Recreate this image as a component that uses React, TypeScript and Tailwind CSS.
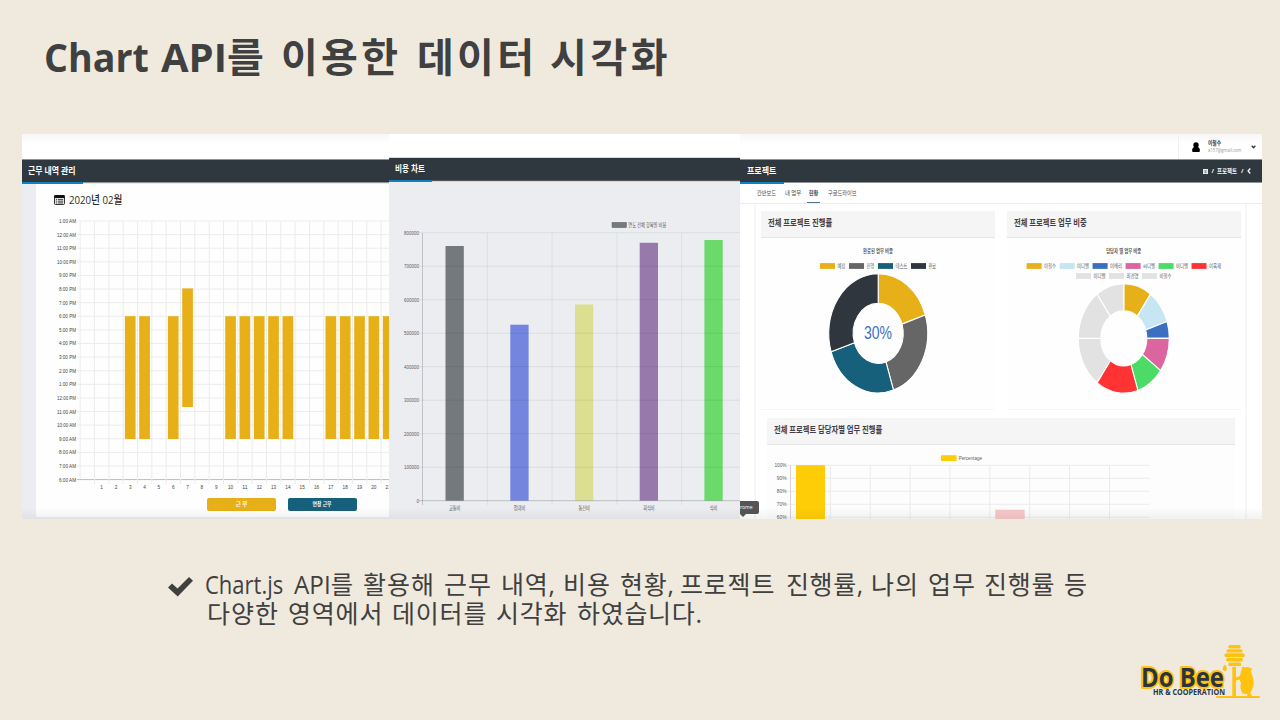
import React from "react";

type TextProps = {
  x: number;
  y: number;
  w: number;
  size: number;
  anchor?: "start" | "middle" | "end";
  fill?: string;
  weight?: number;
  children: string;
};

/* Chart text squeezed to a given width */
function T({ x, y, w, size, anchor = "start", fill = "#5c5c5c", weight = 400, children }: TextProps) {
  return (
    <text
      x={x}
      y={y}
      fontSize={size}
      textAnchor={anchor}
      fill={fill}
      fontWeight={weight}
      textLength={w}
      lengthAdjust="spacingAndGlyphs"
      className="font-['Liberation_Sans','Noto_Sans_CJK_KR',sans-serif]"
    >
      {children}
    </text>
  );
}

const range = (n: number) => Array.from({ length: n }, (_, i) => i);

const HOURS = [
  "1:00 AM", "12:00 AM", "11:00 PM", "10:00 PM", "9:00 PM", "8:00 PM", "7:00 PM", "6:00 PM", "5:00 PM", "4:00 PM",
  "3:00 PM", "2:00 PM", "1:00 PM", "12:00 PM", "11:00 AM", "10:00 AM", "9:00 AM", "8:00 AM", "7:00 AM", "6:00 AM",
];
const WORK_DAYS = [3, 4, 6, 7, 10, 11, 12, 13, 14, 17, 18, 19, 20, 21];

function WorkChart() {
  return (
    <svg className="block h-[284px] w-[353px]" viewBox="36 212 353 284">
      {HOURS.map((h, i) => {
        const y = 221 + i * 13.61;
        return (
          <g key={h}>
            <line x1={77} x2={389} y1={y} y2={y} stroke={i === 19 ? "#bdbdbd" : "#ececec"} strokeWidth={1} />
            <T x={76} y={y + 2} w={h.length > 7 ? 19 : 17} size={5.6} anchor="end" fill="#444444">{h}</T>
          </g>
        );
      })}
      {range(22).map((i) => (
        <line key={i} x1={80.2 + i * 14.33} x2={80.2 + i * 14.33} y1={221} y2={i === 0 ? 479 : 484} stroke="#ececec" strokeWidth={1} />
      ))}
      {WORK_DAYS.map((d) => {
        const top = d === 7 ? 288.4 : 316.2;
        const bottom = d === 7 ? 407 : 439;
        return <rect key={d} x={87.2 + d * 14.33 - 5.3} y={top} width={10.7} height={bottom - top} fill="#e8b018" />;
      })}
      {range(21).map((i) => (
        <T key={i} x={101.6 + i * 14.33} y={489.4} w={i > 8 ? 5.2 : 2.6} size={5.6} anchor="middle" fill="#444444">{String(i + 1)}</T>
      ))}
    </svg>
  );
}

const COSTS = [
  { label: "교통비", x: 445.5, top: 246, fill: "#74797d" },
  { label: "접대비", x: 510.3, top: 324.7, fill: "#7385de" },
  { label: "통신비", x: 575, top: 304.5, fill: "#dcdf91" },
  { label: "회식비", x: 639.7, top: 242.8, fill: "#9779ab" },
  { label: "식비", x: 704.4, top: 240, fill: "#6adb6b" },
];

function CostChart() {
  return (
    <svg className="block h-[300px] w-[351px]" viewBox="389 217 351 300">
      <rect x={612} y={222.3} width={14.5} height={5.4} fill="#74797d" stroke="#666b6d" strokeWidth={0.5} />
      <T x={628.3} y={227.2} w={38} size={5.4}>연도 전체 항목별 비용</T>
      {COSTS.map((c) => (
        <g key={c.label}>
          <rect x={c.x} y={c.top} width={18.3} height={500.6 - c.top} fill={c.fill} />
          <T x={c.x + 9.2} y={510} w={c.label.length > 2 ? 11.5 : 7.5} size={5.4} anchor="middle">{c.label}</T>
        </g>
      ))}
      {range(9).map((i) => {
        const y = 232.7 + i * 33.5;
        return (
          <g key={i}>
            <line x1={419} x2={740} y1={y} y2={y} stroke="#000000" strokeOpacity={i === 8 ? 0.2 : 0.07} />
            <T x={419} y={y + 2} w={i === 8 ? 2.6 : 15} size={5.6} anchor="end">{i === 8 ? "0" : `${8 - i}00000`}</T>
          </g>
        );
      })}
      {range(5).map((i) => (
        <line key={i} x1={422.5 + i * 64.8} x2={422.5 + i * 64.8} y1={233} y2={505} stroke="#000000" strokeOpacity={i === 0 ? 0.18 : 0.06} />
      ))}
    </svg>
  );
}

type Slice = { from: number; to: number; fill: string };

function Donut({ cx, cy, rx, ry, ix, iy, slices }: { cx: number; cy: number; rx: number; ry: number; ix: number; iy: number; slices: Slice[] }) {
  const at = (p: number, a: number, b: number) => {
    const t = (p / 100) * Math.PI * 2;
    return `${(cx + a * Math.sin(t)).toFixed(2)} ${(cy - b * Math.cos(t)).toFixed(2)}`;
  };
  return (
    <g>
      {slices.map((s) => (
        <path
          key={s.from}
          d={`M${at(s.from, rx, ry)} A${rx} ${ry} 0 0 1 ${at(s.to, rx, ry)} L${at(s.to, ix, iy)} A${ix} ${iy} 0 0 0 ${at(s.from, ix, iy)} Z`}
          fill={s.fill}
          stroke="#ffffff"
          strokeWidth={1.1}
        />
      ))}
    </g>
  );
}

type LegendItem = { x: number; y: number; label: string; fill: string; w: number };

function Legend({ items }: { items: LegendItem[] }) {
  return (
    <g>
      {items.map((l) => (
        <g key={`${l.x}-${l.y}`}>
          <rect x={l.x} y={l.y - 2.9} width={15} height={5.8} fill={l.fill} />
          <T x={l.x + 17.4} y={l.y + 1.9} w={l.w} size={5.4}>{l.label}</T>
        </g>
      ))}
    </g>
  );
}

const STATUS_LEGEND: LegendItem[] = [
  { x: 820, y: 266, label: "예정", fill: "#e8b018", w: 7.8 },
  { x: 849, y: 266, label: "진행", fill: "#666666", w: 7.8 },
  { x: 878, y: 266, label: "테스트", fill: "#17607b", w: 12 },
  { x: 911, y: 266, label: "완료", fill: "#2f363e", w: 7.8 },
];

const MEMBER_LEGEND: LegendItem[] = [
  { x: 1026.6, y: 266, label: "이철수", fill: "#e8b018", w: 12 },
  { x: 1059.7, y: 266, label: "이디벨", fill: "#c5e6f2", w: 12 },
  { x: 1092.6, y: 266, label: "이메리", fill: "#3a6fc2", w: 12 },
  { x: 1125.6, y: 266, label: "씨디벨", fill: "#dc649f", w: 12 },
  { x: 1158.6, y: 266, label: "비디벨", fill: "#4bdb66", w: 12 },
  { x: 1191.5, y: 266, label: "이옥재", fill: "#ff3333", w: 12 },
  { x: 1076, y: 276, label: "이디벨", fill: "#e2e2e2", w: 12 },
  { x: 1109, y: 276, label: "최경영", fill: "#e2e2e2", w: 12 },
  { x: 1142, y: 276, label: "비철수", fill: "#e2e2e2", w: 12 },
];

function StatusDonut() {
  return (
    <svg className="block h-[171px] w-[234px]" viewBox="761 238 234 171">
      <T x={878} y={252.8} w={30} size={5.4} anchor="middle" weight={700} fill="#555555">완료된 업무 비중</T>
      <Legend items={STATUS_LEGEND} />
      <Donut
        cx={878.2} cy={333.4} rx={49.5} ry={59.6} ix={25} iy={30}
        slices={[
          { from: 0, to: 20, fill: "#e8b018" },
          { from: 20, to: 45, fill: "#666666" },
          { from: 45, to: 70, fill: "#17607b" },
          { from: 70, to: 100, fill: "#2f363e" },
        ]}
      />
      <T x={878} y={338.8} w={28} size={17.5} anchor="middle" fill="#3a6fc2">30%</T>
    </svg>
  );
}

function MemberDonut() {
  return (
    <svg className="block h-[171px] w-[234px]" viewBox="1007 238 234 171">
      <T x={1123.7} y={252.8} w={35} size={5.4} anchor="middle" weight={700} fill="#555555">담당자 별 업무 비중</T>
      <Legend items={MEMBER_LEGEND} />
      <Donut
        cx={1123.8} cy={338.4} rx={45.5} ry={54.7} ix={23} iy={27.5}
        slices={[
          { from: 0, to: 10, fill: "#e8b018" },
          { from: 10, to: 20, fill: "#c5e6f2" },
          { from: 20, to: 25, fill: "#3a6fc2" },
          { from: 25, to: 35, fill: "#dc649f" },
          { from: 35, to: 45, fill: "#4bdb66" },
          { from: 45, to: 60, fill: "#ff3333" },
          { from: 60, to: 75, fill: "#e2e2e2" },
          { from: 75, to: 90, fill: "#e2e2e2" },
          { from: 90, to: 100, fill: "#e2e2e2" },
        ]}
      />
    </svg>
  );
}

function ProgressChart() {
  return (
    <svg className="block h-[74px] w-[468px]" viewBox="767 445 468 74">
      {range(5).map((i) => {
        const y = 465.3 + i * 13;
        return (
          <g key={i}>
            <line x1={787} x2={1149.5} y1={y} y2={y} stroke="#ebebeb" />
            <T x={786.5} y={y + 2} w={i ? 9.8 : 12} size={5.6} anchor="end">{`${100 - i * 10}%`}</T>
          </g>
        );
      })}
      {range(9).map((i) => (
        <line key={i} x1={790.5 + i * 39.87} x2={790.5 + i * 39.87} y1={465} y2={519} stroke={i ? "#ebebeb" : "#d5d5d5"} />
      ))}
      <rect x={796} y={465.2} width={29} height={54} fill="#ffcd07" />
      <rect x={995.6} y={510} width={28.6} height={10} fill="#f8c8ca" stroke="#efb9bc" strokeWidth={0.4} />
      <rect x={941} y={455.2} width={15.6} height={5.8} fill="#ffcd07" />
      <T x={958.7} y={460.2} w={23.3} size={5.8}>Percentage</T>
    </svg>
  );
}

function WorkPanel() {
  return (
    <section className="flex h-[385px] w-[367px] flex-col overflow-hidden">
      <div className="h-[25px] bg-gradient-to-b from-[#f7f7f7] to-white to-40%" />
      <div className="flex h-[24px] shrink-0 items-center border-y border-[#8f9396] bg-[#2f373f] pl-[6px]">
        <span className="origin-left scale-x-[0.83] text-[9.5px] leading-none font-bold whitespace-nowrap text-white">근무 내역 관리</span>
      </div>
      <div className="-mt-px h-[2px] w-[61px] shrink-0 bg-[#0f80c4]" />
      <div className="flex min-h-0 flex-1 bg-[#ecedf2] pl-[14px]">
        <div className="flex h-[333px] w-[353px] flex-col rounded-bl-[2px] bg-[#fefefe]">
          <div className="flex h-[28px] items-center pt-[3px] pl-[18px]">
            <svg className="mr-[4px] h-[10px] w-[11px]" viewBox="0 0 11 10">
              <rect x="0.5" y="0.5" width="10" height="9" rx="1" fill="#ddd" stroke="#333" />
              <rect x="0.3" y="0" width="10.4" height="3" rx="1" fill="#111" />
              <path d="M2 4.5H3M4 4.5H9M2 6.2H3M4 6.2H9M2 7.9H3M4 7.9H9" stroke="#444" strokeWidth="0.9" />
            </svg>
            <span className="origin-left scale-x-[0.84] text-[11.5px] leading-none font-medium whitespace-nowrap text-[#2c2c2c]">2020년 02월</span>
          </div>
          <WorkChart />
          <div className="mt-[2px] flex gap-[12px] pl-[171px]">
            <div className="flex h-[13px] w-[69px] items-center justify-center rounded-[2px] bg-[#e8b018] text-[5.6px] font-bold text-white">근 무</div>
            <div className="flex h-[13px] w-[69px] items-center justify-center rounded-[2px] bg-[#17607b] text-[5.6px] font-bold text-white"><span className="scale-x-[0.86]">연장 근무</span></div>
          </div>
        </div>
      </div>
    </section>
  );
}

function CostPanel() {
  return (
    <section className="flex h-[385px] w-[351px] flex-col overflow-hidden bg-[#ecedf1]">
      <div className="h-[24px] shrink-0 border-b border-[#d7d9df] bg-white" />
      <div className="flex h-[23px] shrink-0 items-center border-b border-[#55555a] bg-[#2f373f] pl-[6px]">
        <span className="origin-left scale-x-[0.8] text-[9.5px] leading-none font-bold whitespace-nowrap text-white">비용 차트</span>
      </div>
      <div className="mb-[35px] h-[1px] shrink-0 bg-[#d3d3d6]">
        <div className="h-[2px] w-[43px] -translate-y-px bg-[#0f80c4]" />
      </div>
      <CostChart />
    </section>
  );
}

function CardTitle({ children }: { children: string }) {
  return (
    <div className="flex h-[27px] items-center border-b border-[#e6e6e6] bg-[#f5f5f5] pb-[2px] pl-[6.5px]">
      <span className="origin-left scale-x-[0.76] text-[9.6px] leading-none font-bold whitespace-nowrap text-[#40404b]">{children}</span>
    </div>
  );
}

function ProjectPanel() {
  return (
    <section className="relative flex h-[385px] w-[522px] flex-col overflow-hidden bg-white">
      <div className="flex h-[25px] shrink-0 justify-end bg-gradient-to-b from-[#f7f7f7] to-white to-40%">
        <div className="flex w-[84px] items-center border-l border-[#f0f0f0] pl-[12px]">
          <svg className="mt-[2px] h-[11px] w-[10px]" viewBox="0 0 10 11">
            <circle cx="5" cy="3" r="2.7" fill="#000" />
            <path d="M3.5 4.8H6.5C9 6 9.3 8 8.5 10H1.5C.7 8 1 6 3.5 4.8Z" fill="#000" />
          </svg>
          <div className="ml-[7px] flex w-[43px] flex-col items-start pt-px">
            <span className="origin-left scale-x-[0.85] text-[5.6px] leading-[7px] font-bold whitespace-nowrap text-[#333]">이철수</span>
            <span className="origin-left scale-x-[0.78] text-[5.4px] leading-[7px] whitespace-nowrap text-[#999]">a157@gmail.com</span>
          </div>
          <svg className="h-[4px] w-[5px]" viewBox="0 0 5 4">
            <path d="M.7.8L2.5 2.8L4.3.8" fill="none" stroke="#333" strokeWidth="1.3" />
          </svg>
        </div>
      </div>
      <div className="flex h-[24px] shrink-0 items-center justify-between border-y border-[#8f9396] bg-[#2f373f] pr-[11px] pl-[7px]">
        <span className="origin-left scale-x-[0.84] text-[9.5px] leading-none font-bold whitespace-nowrap text-white">프로젝트</span>
        <div className="flex items-center gap-[3.5px] text-[6px] leading-none font-bold text-white">
          <svg className="h-[5px] w-[5px]" viewBox="0 0 5 5">
            <rect width="5" height="5" fill="#eee" />
            <path d="M.8 1.8H4.2M.8 3.2H4.2M2.5 1.5V4.4" stroke="#68707a" strokeWidth="0.5" />
          </svg>
          <span>/</span>
          <span className="-mx-px scale-x-[0.9] whitespace-nowrap">프로젝트</span>
          <span>/</span>
          <svg className="h-[6px] w-[4px]" viewBox="0 0 4 6">
            <path d="M3.3.5L1 3L3.3 5.5" fill="none" stroke="#fff" strokeWidth="1.2" />
          </svg>
        </div>
      </div>
      <div className="-mt-px h-[2px] w-[44px] shrink-0 bg-[#0f80c4]" />
      <div className="flex h-[20px] shrink-0 border-b border-[#ececec] pl-[17px] text-[6px] leading-[18px] whitespace-nowrap text-[#4c4c4c]">
        <span className="w-[28px]"><span className="inline-block origin-left scale-x-[0.86]">칸반보드</span></span>
        <span className="w-[22px]"><span className="inline-block origin-left scale-x-[0.9]">내 업무</span></span>
        <span className="mr-[8px] h-[19px] w-[13px] border-b border-[#53708c] text-center font-bold text-[#36536f]"><span className="inline-block scale-x-[0.86]">현황</span></span>
        <span className="inline-block origin-left scale-x-[0.86]">구글드라이브</span>
      </div>
      <div className="mr-[15px] ml-[14px] flex flex-1 flex-col border-x-2 border-[#f7f7f8] pt-[7px] pl-[5px]">
        <div className="flex gap-[12px]">
          <div className="h-[199px] w-[234px] border-b border-[#f5f5f5] bg-[#fefefe]">
            <CardTitle>전체 프로젝트 진행률</CardTitle>
            <StatusDonut />
          </div>
          <div className="h-[199px] w-[234px] border-b border-[#f5f5f5] bg-[#fefefe]">
            <CardTitle>전체 프로젝트 업무 비중</CardTitle>
            <MemberDonut />
          </div>
        </div>
        <div className="mt-[8px] ml-[6px] w-[468px] bg-[#fdfdfd]">
          <CardTitle>전체 프로젝트 담당자별 업무 진행률</CardTitle>
          <ProgressChart />
        </div>
      </div>
      <div className="absolute bottom-[2px] left-0 h-[16px] w-[19px]">
        <div className="flex h-[13px] items-center rounded-r-[2px] bg-[#555] text-[5.6px] text-white"><span className="origin-left scale-x-[0.9]">rome</span></div>
        <div className="h-0 w-0 border-x-[3px] border-t-[3px] border-x-transparent border-t-[#555]" />
      </div>
    </section>
  );
}

function Logo() {
  return (
    <svg className="block h-[56px] w-[124px]" viewBox="1138 643 124 56">
      <g fill="#ffc20e">
        <rect x={1228.3} y={645} width={12.4} height={3.4} rx={1.7} />
        <rect x={1226.5} y={649.2} width={16} height={3.4} rx={1.7} />
        <rect x={1224.5} y={653.3} width={20.2} height={3.8} rx={1.9} />
        <rect x={1226} y={658} width={17} height={3.5} rx={1.7} />
        <rect x={1228.3} y={662.6} width={13} height={3.5} rx={1.7} />
        <rect x={1232.3} y={666.8} width={3.7} height={30} />
        <rect x={1216} y={696} width={44} height={1.9} rx={0.9} />
        <path d="M1236 677.5L1241 675.5L1242 679L1236 680.5Z" />
        <path d="M1242 669C1241 666.5 1243.5 666.3 1244.5 667.5C1247 666.5 1249 667 1250 668.2C1252 667.5 1252.3 669.5 1251 670.5C1250.7 673 1253.8 676.5 1253.6 683C1253.6 688 1251 691 1250.4 693L1252 696.2H1247L1247.5 694L1242.5 693.5C1240.3 690 1240 686 1241 683C1238.8 679 1240 674 1242 669Z" />
        <path d="M1224.8 664.5C1227.3 667 1227.8 671 1224.8 671C1221.8 671 1222.3 667 1224.8 664.5Z" />
      </g>
      <text x={1141} y={687} textLength={83} lengthAdjust="spacingAndGlyphs" fontSize={26} fontWeight={700} fill="#2b3540" stroke="#ffc20e" strokeWidth={4} strokeLinejoin="round" paintOrder="stroke">
        Do Bee
      </text>
      <text x={1153} y={695.4} textLength={72} lengthAdjust="spacingAndGlyphs" fontSize={8} fontWeight={700} fill="#2b3540">
        HR &amp; COOPERATION
      </text>
    </svg>
  );
}

export default function App() {
  return (
    <main className="flex h-[720px] w-[1280px] flex-col overflow-hidden bg-[#f0eade] font-['Open_Sans','Noto_Sans_CJK_KR',sans-serif]">
      <h1 className="flex h-[134px] shrink-0 pt-[28px] pl-[44px] text-[40px] leading-[58px] font-bold whitespace-nowrap text-[#404040]">
        <span className="w-[117px]"><span className="inline-block origin-left scale-x-[0.94]">Chart</span></span>
        <span className="w-[120px]">API를</span>
        <span className="w-[136px] tracking-[3.3px]">이용한</span>
        <span className="w-[133px] tracking-[3.3px]">데이터</span>
        <span className="tracking-[3.6px]">시각화</span>
      </h1>
      <div className="relative ml-[22px] flex h-[385px] w-[1240px] shrink-0">
        <WorkPanel />
        <CostPanel />
        <ProjectPanel />
        <div className="absolute inset-x-0 bottom-0 h-[12px] bg-gradient-to-b from-transparent to-black/5" />
      </div>
      <div className="flex h-[124px] shrink-0 pt-[51px] pl-[168px] text-[25px] leading-[29px] whitespace-nowrap text-[#404040]">
        <svg className="mt-[7px] mr-[12px] h-[20px] w-[25px]" viewBox="0 0 25 20">
          <path d="M0 10.5L4 6.5L9.5 11.5L21 0L25 3.7L9.7 19.5Z" fill="#404040" />
        </svg>
        <div>
          <p className="flex">
            <span className="w-[89px]"><span className="inline-block origin-left scale-x-[0.88]">Chart.js</span></span>
            <span className="w-[69px]"><span className="inline-block origin-left scale-x-[0.97]">API를</span></span>
            <span className="w-[81px] tracking-[1px]">활용해</span>
            <span className="w-[57px] tracking-[1px]">근무</span>
            <span className="w-[62px] tracking-[0.8px]">내역,</span>
            <span className="w-[57px] tracking-[1px]">비용</span>
            <span className="w-[60px] tracking-[0.8px]">현황,</span>
            <span className="w-[106px] tracking-[0.8px]">프로젝트</span>
            <span className="w-[85px] tracking-[0.6px]">진행률,</span>
            <span className="w-[57px] tracking-[1px]">나의</span>
            <span className="w-[56px] tracking-[1px]">업무</span>
            <span className="w-[80px] tracking-[0.8px]">진행률</span>
            <span>등</span>
          </p>
          <p className="flex pl-[2px]">
            <span className="w-[81px] tracking-[1px]">다양한</span>
            <span className="w-[104px] tracking-[0.8px]">영역에서</span>
            <span className="w-[104px] tracking-[0.8px]">데이터를</span>
            <span className="w-[81px] tracking-[0.8px]">시각화</span>
            <span className="tracking-[0.7px]">하였습니다.</span>
          </p>
        </div>
      </div>
      <div className="flex justify-end pr-[18px]">
        <Logo />
      </div>
    </main>
  );
}
